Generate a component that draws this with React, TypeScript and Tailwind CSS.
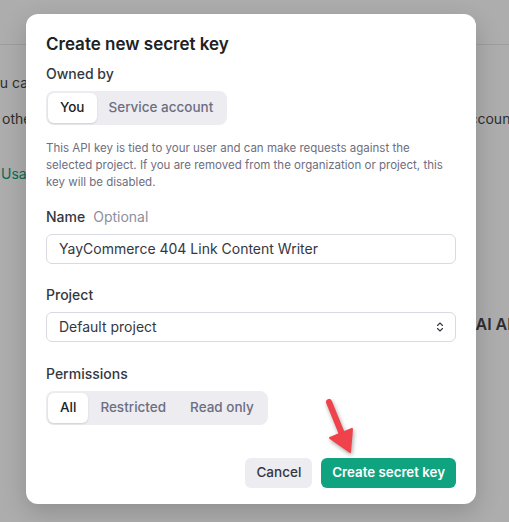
import React from "react";
import { ChevronsUpDown } from "lucide-react";

const OWNERS = ["You", "Service account"];
const PERMISSIONS = ["All", "Restricted", "Read only"];

const Segmented = ({ items, active }: { items: string[]; active: number }) => (
  <div className="inline-flex self-start rounded-lg bg-[#ececf1] p-[2px]">
    {items.map((label, i) => (
      <div
        key={label}
        className={
          i === active
            ? "flex h-[30px] items-center rounded-md bg-white px-3 text-[13.5px] font-medium text-[#202123] shadow-[0_1px_2px_rgba(0,0,0,0.12)]"
            : "flex h-[30px] items-center rounded-md px-3 text-[13.5px] font-medium text-[#6e6e80]"
        }
      >
        {label}
      </div>
    ))}
  </div>
);

export default function App() {
  return (
    <div
      className="relative h-[522px] w-[509px] overflow-hidden bg-[#adadad] text-[#2e2e2e]"
      style={{ fontFamily: "Inter, 'Noto Sans', sans-serif" }}
    >
      {/* Page behind the dialog */}
      <div className="h-[45px] border-b border-[#9d9d9d]" />
      <div className="flex flex-col text-[14px]">
        <div className="mt-[27px] flex justify-between">
          <span className="-ml-[17px]">You can</span>
        </div>
        <div className="mt-[15px] flex justify-between">
          <span className="ml-[2px]">others</span>
          <span className="-mr-[6px]">account</span>
        </div>
        <div className="mt-[34px] flex">
          <span className="ml-[1px] text-[#0b6b53]">Usage</span>
        </div>
        <div className="mt-[128px] flex justify-end">
          <span className="-mr-[13px] text-[16px] font-semibold">AI API</span>
        </div>
      </div>

      {/* Dialog */}
      <div className="absolute left-[26px] top-[14px] flex w-[450px] flex-col rounded-xl bg-white px-5 pb-4 pt-[18px] shadow-[0_8px_24px_rgba(0,0,0,0.18)]">
        <h2 className="text-[17px] font-semibold text-[#202123]">Create new secret key</h2>

        <div className="mt-[5px] text-[14px] font-medium text-[#353740]">Owned by</div>
        <div className="mt-[7px] flex">
          <Segmented items={OWNERS} active={0} />
        </div>
        <p className="mt-[15px] text-[11.5px] leading-[17px] text-[#6e6e80]">
          This API key is tied to your user and can make requests against the selected project. If you
          are removed from the organization or project, this key will be disabled.
        </p>

        <div className="mt-[15px] text-[14px]">
          <span className="font-medium text-[#353740]">Name</span>
          <span className="ml-2 text-[#8e8ea0]">Optional</span>
        </div>
        <div className="mt-[7px] flex h-[30px] items-center rounded-md border border-[#d9d9e3] px-3 text-[14px] text-[#353740]">
          YayCommerce 404 Link Content Writer
        </div>

        <div className="mt-[20px] text-[14px] font-medium text-[#353740]">Project</div>
        <div className="mt-[7px] flex h-[30px] items-center justify-between rounded-md border border-[#d9d9e3] pl-3 pr-[9px] text-[14px] text-[#353740]">
          <span>Default project</span>
          <ChevronsUpDown className="h-3 w-3 text-[#353740]" strokeWidth={2.2} />
        </div>

        <div className="mt-[21px] text-[14px] font-medium text-[#353740]">Permissions</div>
        <div className="mt-[7px] flex">
          <Segmented items={PERMISSIONS} active={0} />
        </div>

        <div className="mt-[33px] flex justify-end gap-[9px]">
          <button className="h-[30px] rounded-md bg-[#ececf1] px-[11px] text-[13.5px] font-medium text-[#353740]">
            Cancel
          </button>
          <button className="h-[30px] rounded-md bg-[#10a37f] px-[11px] text-[13.3px] font-semibold text-white">
            Create secret key
          </button>
        </div>
      </div>

      {/* Red annotation arrow */}
      <svg
        className="pointer-events-none absolute left-[318px] top-[396px] drop-shadow-[1px_2px_2px_rgba(0,0,0,0.35)]"
        width="44"
        height="62"
        viewBox="0 0 44 62"
      >
        <path d="M11 6 L24 38" stroke="#f0424a" strokeWidth="6" strokeLinecap="round" fill="none" />
        <path d="M12 42 L34 33 L32 56 Z" fill="#f0424a" stroke="#f0424a" strokeWidth="2" strokeLinejoin="round" />
      </svg>
    </div>
  );
}
